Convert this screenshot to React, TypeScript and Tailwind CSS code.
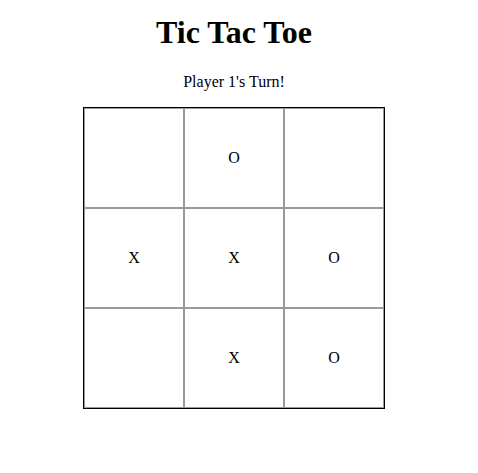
import React from "react";

const board: string[] = ["", "O", "", "X", "X", "O", "", "X", "O"];

export default function App() {
  return (
    <div className="w-[468px] flex flex-col items-center font-['Liberation_Serif',serif] text-black bg-white">
      <h1 className="mt-[14px] mb-[22px] text-[32px] font-bold leading-[normal]">Tic Tac Toe</h1>
      <p className="mt-0 mb-4 text-base leading-[normal]">Player 1's Turn!</p>
      <div className="grid grid-cols-[100px_100px_100px] border border-black">
        {board.map((v, i) => (
          <div
            key={i}
            className="w-[100px] h-[100px] border border-[#999999] flex items-center justify-center text-base"
          >
            {v}
          </div>
        ))}
      </div>
    </div>
  );
}
